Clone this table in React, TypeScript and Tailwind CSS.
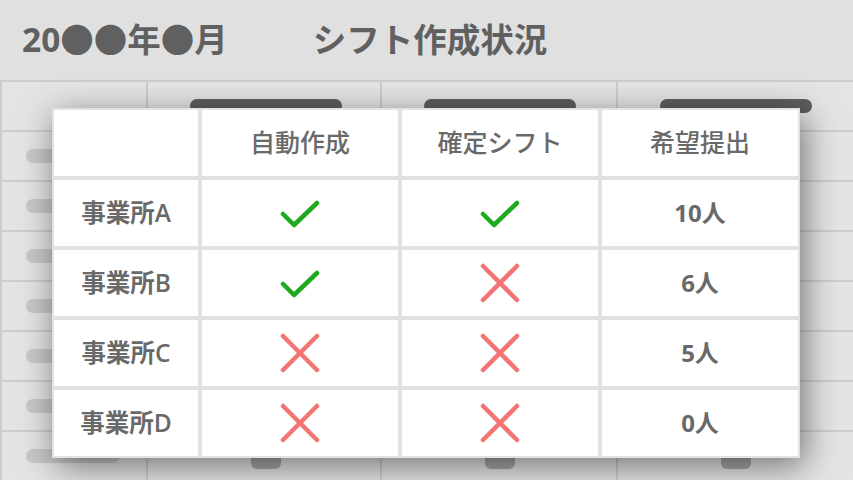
import React from "react";

type Mark = "ok" | "ng";

const offices: { name: string; auto: Mark; fixed: Mark; count: string }[] = [
  { name: "事業所A", auto: "ok", fixed: "ok", count: "10人" },
  { name: "事業所B", auto: "ok", fixed: "ng", count: "6人" },
  { name: "事業所C", auto: "ng", fixed: "ng", count: "5人" },
  { name: "事業所D", auto: "ng", fixed: "ng", count: "0人" },
];

function Check() {
  return (
    <svg width="40" height="32" viewBox="0 0 40 32" fill="none">
      <polyline
        points="3,17 14,28 37,6"
        stroke="#1eaa1e"
        strokeWidth="4.5"
        strokeLinecap="round"
        strokeLinejoin="round"
      />
    </svg>
  );
}

function Cross() {
  return (
    <svg width="40" height="40" viewBox="0 0 40 40" fill="none">
      <path
        d="M3 3 L37 37 M37 3 L3 37"
        stroke="#f47474"
        strokeWidth="4.5"
        strokeLinecap="round"
      />
    </svg>
  );
}

function MarkIcon({ mark }: { mark: Mark }) {
  return mark === "ok" ? <Check /> : <Cross />;
}

const rows = [0, 1, 2, 3, 4, 5, 6, 7];

export default function App() {
  return (
    <div className="relative w-[853px] h-[480px] overflow-hidden bg-[#e0e0e0] font-['Open_Sans','Noto_Sans_CJK_JP',sans-serif] text-[#696969]">
      {/* header */}
      <div className="h-[80px] flex items-center pl-[22px] gap-[85px] text-[33.5px] font-bold text-[#606060] leading-none">
        <span>20●●年●月</span>
        <span>シフト作成状況</span>
      </div>

      {/* background sheet */}
      <div className="grid grid-cols-[144px_232px_234px_1fr] auto-rows-[48px] gap-[2px] bg-[#cdcdcd] p-[2px] pr-0">
        {rows.map((r) => (
          <React.Fragment key={r}>
            <div className="bg-[#e4e4e4] flex items-center pl-[24px]">
              {r > 0 && <div className="w-[94px] h-[14px] rounded-full bg-[#c8c8c8]" />}
            </div>
            {[0, 1, 2].map((c) => (
              <div key={c} className="bg-[#e4e4e4] flex items-center pl-[42px]">
                {r === 0 && <div className="w-[152px] h-[14px] rounded-full bg-[#5e5e5e]" />}
                {r === 7 && (
                  <div className="ml-[61px] w-[30px] h-[26px] rounded-[6px] bg-[#a8a8a8]" />
                )}
              </div>
            ))}
          </React.Fragment>
        ))}
      </div>

      {/* status modal */}
      <div className="absolute left-[52px] top-[108px] w-[748px] bg-[#e2e2e2] p-[2px] shadow-[4px_8px_32px_rgba(0,0,0,0.5)]">
        <div className="grid grid-cols-[144px_196px_196px_196px] auto-rows-[66px] gap-[4px]">
          <div className="bg-white" />
          {["自動作成", "確定シフト", "希望提出"].map((h) => (
            <div key={h} className="bg-white flex items-center justify-center text-[25px] font-medium">
              {h}
            </div>
          ))}
          {offices.map((o) => (
            <React.Fragment key={o.name}>
              <div className="bg-white flex items-center justify-center text-[24.5px] font-semibold">
                {o.name}
              </div>
              <div className="bg-white flex items-center justify-center">
                <MarkIcon mark={o.auto} />
              </div>
              <div className="bg-white flex items-center justify-center">
                <MarkIcon mark={o.fixed} />
              </div>
              <div className="bg-white flex items-center justify-center text-[24px] font-bold">
                {o.count}
              </div>
            </React.Fragment>
          ))}
        </div>
      </div>
    </div>
  );
}
